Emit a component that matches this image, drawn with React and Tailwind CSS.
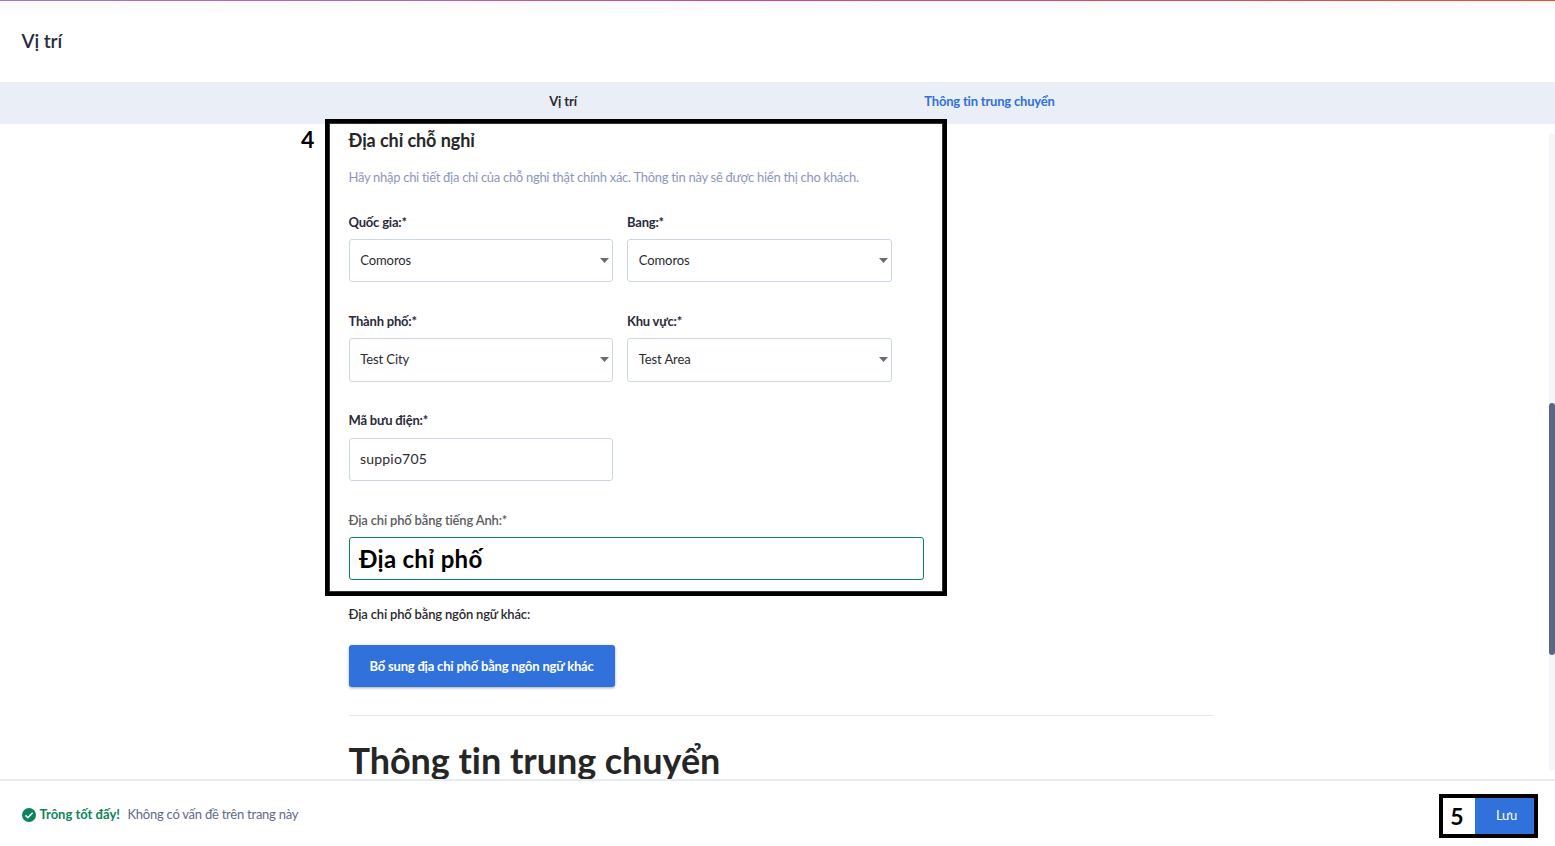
import React, { useState } from "react";

const CheckCircle = () => (
  <svg className="w-[14px] h-[14px] shrink-0" viewBox="0 0 14 14" fill="none">
    <circle cx="7" cy="7" r="7" fill="#0d8558" />
    <path d="M3.5 7.4l2.3 2.3 4.8-5" stroke="#fff" strokeWidth="1.5" />
  </svg>
);

const Caret = () => (
  <svg className="w-[9px] h-[5px] shrink-0" viewBox="0 0 9 5">
    <path d="M0 0h9L4.5 5z" fill="#6b6b6b" />
  </svg>
);

const Field = ({ label, children }) => (
  <div className="flex flex-col">
    <label className="h-[17px] leading-[17px] text-[13px] font-bold tracking-[-0.2px] mb-[8px] text-[#2a2a3a]">
      {label}
    </label>
    {children}
  </div>
);

const SelectBox = ({ value, className = "h-[43px]" }) => (
  <div
    className={`flex items-center justify-between border border-[#ccd6eb] rounded-[3px] pl-[10.8px] pr-[3px] text-[13px] tracking-[-0.1px] ${className}`}
  >
    <span>{value}</span>
    <Caret />
  </div>
);

const App = () => {
  const [postalCode, setPostalCode] = useState("suppio705");

  return (
    <div className="relative w-[1555px] h-[846px] overflow-hidden flex flex-col bg-white text-[#2a2a2e] font-['Lato','Noto_Sans',sans-serif] [font-variant-ligatures:none]">
      <div className="h-px shrink-0 bg-linear-to-r from-[#9a7bc8] via-[#d0448a] to-[#e8502a]" />
      <header className="h-[81px] shrink-0 flex items-center pl-[21.5px] bg-linear-to-b from-[#f9f9f9] to-white to-20%">
        <h1 className="text-[19px] font-semibold tracking-[-0.1px] text-[#2a2a3e]">
          Vị trí
        </h1>
      </header>

      <nav className="h-[42px] shrink-0 flex pl-[349px] bg-[#eaeef7] text-[13px] font-bold">
        <div className="w-[428px] flex items-center justify-center border-b-2 border-black pb-px tracking-[-0.15px]">
          Vị trí
        </div>
        <div className="w-[425px] flex items-center justify-center pb-[3px] tracking-[-0.2px] text-[#3071db]">
          Thông tin trung chuyển
        </div>
      </nav>

      <div className="h-[655px] shrink-0 flex justify-between">
        <main className="ml-[348.5px] w-[864.5px] flex flex-col">
          <h2 className="mt-[4px] h-[24px] leading-[24px] text-[18px] font-bold tracking-[-0.08px] text-[#262626]">
            Địa chỉ chỗ nghỉ
          </h2>
          <p className="mt-[17px] h-[17px] leading-[17px] text-[13px] tracking-[-0.29px] text-[#8c98b8]">
            Hãy nhập chi tiết địa chỉ của chỗ nghỉ thật chính xác. Thông tin này
            sẽ được hiển thị cho khách.
          </p>

          <div className="mt-[28px] grid grid-cols-[264.5px_265px] gap-x-[14px] gap-y-[31px]">
            <Field label="Quốc gia:*">
              <SelectBox value="Comoros" />
            </Field>
            <Field label="Bang:*">
              <SelectBox value="Comoros" />
            </Field>
            <Field label="Thành phố:*">
              <SelectBox value="Test City" className="h-[44px] pb-px" />
            </Field>
            <Field label="Khu vực:*">
              <SelectBox value="Test Area" className="h-[44px] pb-px" />
            </Field>
            <div className="-mt-px">
              <Field label="Mã bưu điện:*">
                <input
                  className="mt-px h-[43px] border border-[#ccd6eb] rounded-[3px] px-[10.5px] pb-[2px] text-[14px] tracking-[0.2px] outline-none"
                  value={postalCode}
                  onChange={(e) => setPostalCode(e.target.value)}
                />
              </Field>
            </div>
          </div>

          <div className="mt-[31px] w-[575px] flex flex-col">
            <label className="h-[17px] leading-[17px] text-[13px] font-semibold tracking-[-0.17px] text-[#5c5c60]">
              Địa chỉ phố bằng tiếng Anh:*
            </label>
            <div className="mt-[8px] h-[43px] flex items-center border border-[#0d8558] rounded-[3px] pl-[9.5px] text-[24px] font-bold tracking-[0.28px] text-black">
              Địa chỉ phố
            </div>
          </div>

          <p className="mt-[26px] h-[17px] leading-[17px] text-[13px] font-semibold tracking-[-0.17px]">
            Địa chỉ phố bằng ngôn ngữ khác:
          </p>
          <button className="mt-[22px] w-[266px] h-[42px] shrink-0 rounded-[3px] pt-px bg-[#3071db] text-white text-[13px] font-bold tracking-[-0.19px] shadow-[0_1px_3px_rgba(0,0,0,0.35)]">
            Bổ sung địa chỉ phố bằng ngôn ngữ khác
          </button>

          <hr className="mt-[28px] border-[#e3e8f1]" />
          <h2 className="mt-[22px] h-[44px] shrink-0 leading-[44px] text-[36px] font-bold tracking-[-0.05px] text-[#262626]">
            Thông tin trung chuyển
          </h2>
        </main>

        <div className="mt-[9px] w-[6px] h-[638px] rounded-full bg-[#f5f6f9]">
          <div className="mt-[270px] h-[252px] rounded-full bg-[#596684]" />
        </div>
      </div>

      <footer className="h-[67px] shrink-0 flex items-start justify-between border-t-2 border-[#e6eaf4]">
        <div className="flex items-center ml-[22px] mt-[25px] h-[18px] text-[13px]">
          <CheckCircle />
          <span className="ml-[3.5px] font-bold text-[#0d8558]">
            Trông tốt đấy!
          </span>
          <span className="ml-[7.5px] tracking-[-0.24px] text-[#5f6b88]">
            Không có vấn đề trên trang này
          </span>
        </div>
        <div className="mt-[13px] mr-[17px] w-[99px] h-[44px] flex border-4 border-black">
          <span className="w-[32px] pr-[4px] flex items-center justify-center text-[23px] font-bold text-black">
            5
          </span>
          <button className="flex-1 pl-[4px] bg-[#3071db] text-white text-[13px] tracking-[-0.2px]">
            Lưu
          </button>
        </div>
      </footer>

      {/* numbered step marker around the address section */}
      <div className="absolute left-[301px] top-[119px] flex pointer-events-none">
        <span className="w-[24px] pt-[4px] text-[23px] leading-[32px] font-bold text-black">
          4
        </span>
        <div className="w-[622px] h-[477px] border-4 border-black shadow-[inset_0_0_0_1px_#333]" />
      </div>
    </div>
  );
};

export default App;
